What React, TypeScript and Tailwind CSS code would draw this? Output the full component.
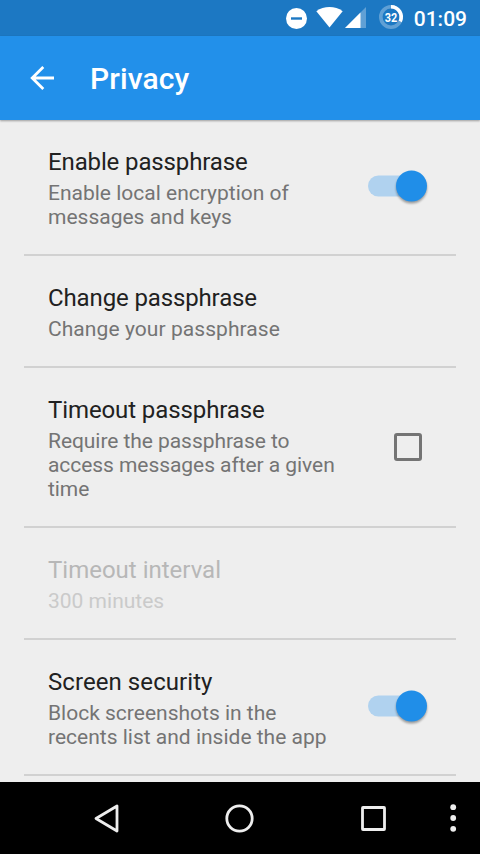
import { useState } from 'react';
import clsx from 'clsx';

interface Preference {
  id: string;
  title: string;
  summary: string[];
  control?: 'switch' | 'checkbox';
  disabled?: boolean;
  titleClass?: string;
  summaryClass?: string;
}

const preferences: Preference[] = [
  {
    id: 'enable',
    title: 'Enable passphrase',
    summary: ['Enable local encryption of', 'messages and keys'],
    control: 'switch',
    titleClass: 'tracking-[-0.13px]',
  },
  {
    id: 'change',
    title: 'Change passphrase',
    summary: ['Change your passphrase'],
    titleClass: 'tracking-[-0.13px]',
    summaryClass: 'tracking-[0.07px]',
  },
  {
    id: 'timeout',
    title: 'Timeout passphrase',
    summary: ['Require the passphrase to', 'access messages after a given', 'time'],
    control: 'checkbox',
    titleClass: 'tracking-[-0.1px]',
    summaryClass: 'tracking-[-0.06px]',
  },
  { id: 'interval', title: 'Timeout interval', summary: ['300 minutes'], disabled: true },
  {
    id: 'screen',
    title: 'Screen security',
    summary: ['Block screenshots in the', 'recents list and inside the app'],
    control: 'switch',
    titleClass: 'tracking-[0.07px]',
  },
];

function StatusBar() {
  return (
    <div className="flex h-9 shrink-0 items-center justify-between bg-[#1c78c3] pl-[284px] pr-[13px]">
      <svg width="122" height="36" viewBox="284 0 122 36" className="shrink-0">
        <circle cx="296.5" cy="18.5" r="10.5" fill="#fff" />
        <path d="M291 18.5h11" stroke="#1c78c3" strokeWidth="2.4" />
        <path d="M316.3 11.2C323.8 5.7 335.2 5.7 342.7 11.2L329.5 27.5Z" fill="#fff" />
        <path d="M366 7v21h-21Z" fill="#fff" fillOpacity=".3" />
        <path d="M360.5 12.5V28H345Z" fill="#fff" />
        <circle cx="391" cy="17" r="10.2" fill="none" stroke="#fff" strokeOpacity=".3" strokeWidth="3.6" />
        <path d="M391 6.8A10.2 10.2 0 0 1 400.2 21.4" fill="none" stroke="#fff" strokeWidth="3.6" />
        <text
          x="391"
          y="22"
          textAnchor="middle"
          textLength="12.5"
          lengthAdjust="spacingAndGlyphs"
          fill="#fff"
          className="text-[12px] font-bold"
        >
          32
        </text>
      </svg>
      <span className="pt-0.5 text-[21px] leading-9 font-medium text-white">01:09</span>
    </div>
  );
}

function Toolbar() {
  return (
    <header className="z-10 flex h-21 shrink-0 items-center bg-[#2290ea] pl-[30px] shadow-[0_1px_2px_rgba(0,0,0,0.35)]">
      <svg width="25" height="26" viewBox="0 0 25 26" fill="none" stroke="#fff" strokeWidth="2.8">
        <path d="M24 13H2.5M13.3 1.9L2.2 13l11.1 11.1" />
      </svg>
      <h1 className="ml-[35px] pt-0.5 text-[30px] leading-9 font-medium tracking-[0.1px] text-white">Privacy</h1>
    </header>
  );
}

function Switch({ checked, onClick }: { checked: boolean; onClick: () => void }) {
  return (
    <button role="switch" aria-checked={checked} onClick={onClick} className="mr-[53px] mb-[5px] block h-8 w-[59px]">
      <svg width="59" height="32" viewBox="0 0 59 32" className="overflow-visible">
        <rect y="5.5" width="56" height="21" rx="10.5" fill={checked ? '#b0d2ef' : '#b9b9b9'} />
        <circle
          cx={checked ? 43.5 : 15.5}
          cy="16"
          r="15.5"
          fill={checked ? '#208ee8' : '#fafafa'}
          className="drop-shadow-[0_2px_1px_rgba(0,0,0,0.35)]"
        />
      </svg>
    </button>
  );
}

function Checkbox({ checked, onClick }: { checked: boolean; onClick: () => void }) {
  return (
    <button
      role="checkbox"
      aria-checked={checked}
      onClick={onClick}
      className="mr-[58px] mb-1 flex size-7 items-center justify-center rounded-[3px] border-3 border-[#747474]"
    >
      {checked && <span className="size-4 bg-[#208ee8]" />}
    </button>
  );
}

function NavigationBar() {
  return (
    <nav className="z-10 h-18 shrink-0 bg-black">
      <svg width="480" height="72" viewBox="0 782 480 72" fill="none" stroke="#eee" strokeWidth="2.8">
        <path d="M96 818.5L117 806v25Z" strokeLinejoin="round" />
        <circle cx="239.5" cy="818.5" r="12.7" />
        <rect x="362.5" y="807.5" width="22" height="22" rx=".5" strokeLinejoin="round" />
        <g fill="#eee" stroke="none">
          <circle cx="453.2" cy="807.2" r="2.9" />
          <circle cx="453.2" cy="818" r="2.9" />
          <circle cx="453.2" cy="828.8" r="2.9" />
        </g>
      </svg>
    </nav>
  );
}

export default function App() {
  const [values, setValues] = useState<Record<string, boolean>>({
    enable: true,
    timeout: false,
    screen: true,
  });

  const toggle = (id: string) => setValues((prev) => ({ ...prev, [id]: !prev[id] }));

  return (
    <div className="flex h-[854px] w-[480px] flex-col overflow-hidden bg-[#eeeeee] font-[Roboto,sans-serif]">
      <StatusBar />
      <Toolbar />
      <main className="min-h-0 flex-1 overflow-hidden">
        {preferences.map((pref) => (
          <section key={pref.id}>
            <div className="flex items-center justify-between pt-7 pb-[25px] pl-12">
              <div>
                <h2
                  className={clsx(
                    'text-[24px] leading-7',
                    pref.disabled ? 'text-[#b7b7b7]' : 'text-[#212121]',
                    pref.titleClass
                  )}
                >
                  {pref.title}
                </h2>
                <p
                  className={clsx(
                    'mt-[5px] text-[21px] leading-6 whitespace-nowrap',
                    pref.disabled ? 'text-[#cacaca]' : 'text-[#747474]',
                    pref.summaryClass
                  )}
                >
                  {pref.summary.map((line) => (
                    <span key={line} className="block">
                      {line}
                    </span>
                  ))}
                </p>
              </div>
              {pref.control === 'switch' && <Switch checked={values[pref.id]} onClick={() => toggle(pref.id)} />}
              {pref.control === 'checkbox' && <Checkbox checked={values[pref.id]} onClick={() => toggle(pref.id)} />}
            </div>
            <div className="mx-6 h-0.5 bg-[#d1d1d1]" />
          </section>
        ))}
      </main>
      <NavigationBar />
    </div>
  );
}
